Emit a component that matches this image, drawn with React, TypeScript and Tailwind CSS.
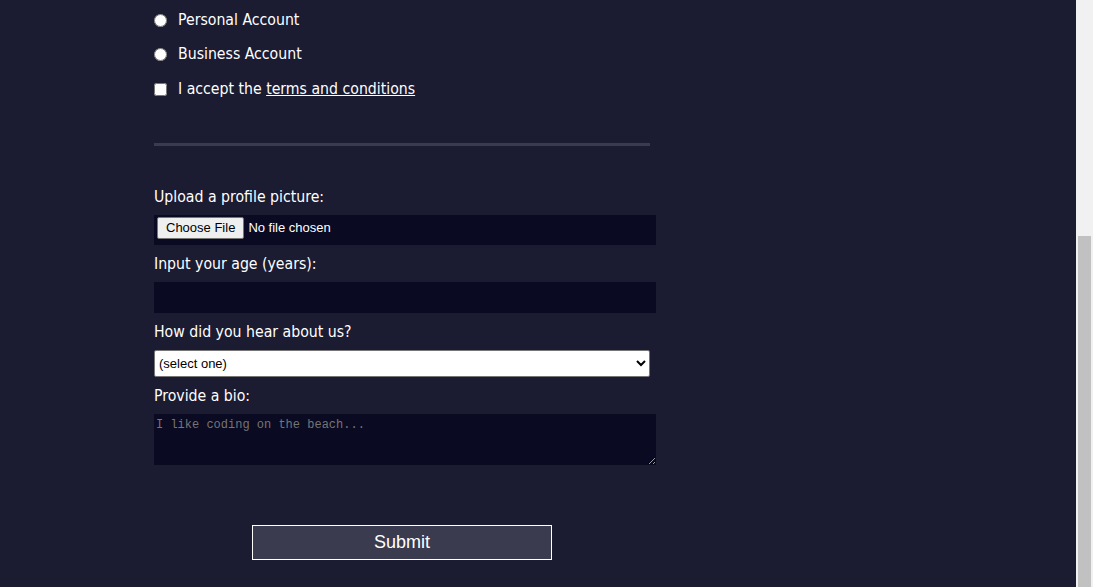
export default function App() {
  return (
    <div className="flex h-[587px] w-full overflow-hidden bg-[#1b1b32]">
      <div className="flex-1 pl-[154px] text-white font-['DejaVu_Sans_Condensed','Noto_Sans',sans-serif] text-[15.7px]">
        <div className="w-[502px] pt-[3px]">
          <label className="flex h-[34px] items-center gap-[11px]">
            <input type="radio" name="acc" className="m-0 h-[13px] w-[13px]" />
            <span>Personal Account</span>
          </label>
          <label className="flex h-[34px] items-center gap-[11px]">
            <input type="radio" name="acc" className="m-0 h-[13px] w-[13px]" />
            <span>Business Account</span>
          </label>
          <label className="mt-[1px] flex h-[34px] items-center gap-[11px]">
            <input type="checkbox" className="m-0 h-[13px] w-[13px]" />
            <span>
              I accept the <a className="underline">terms and conditions</a>
            </span>
          </label>

          <div className="mt-[37px] h-[3px] w-[496px] bg-[#3b3b4f]" />

          <div className="mt-[40px] h-[20px] leading-[22px]">Upload a profile picture:</div>
          <div className="mt-[9px] flex h-[30px] items-center bg-[#0a0a23] px-[3px] pb-[4px]">
            <input
              type="file"
              className="text-[13px] font-['Liberation_Sans',Arial,sans-serif] text-white file:mr-[4px] file:rounded-[2px] file:border file:border-[#767676] file:bg-[#efefef] file:px-[8px] file:py-0 file:text-[13px] file:text-black"
            />
          </div>

          <div className="mt-[8px] h-[20px] leading-[22px]">Input your age (years):</div>
          <input type="number" className="mt-[9px] block h-[31px] w-full bg-[#0a0a23] outline-none" />

          <div className="mt-[8px] h-[20px] leading-[22px]">How did you hear about us?</div>
          <select className="mt-[9px] block h-[27px] w-[496px] rounded-[2px] border border-[#767676] bg-white px-0 text-[13px] font-['Liberation_Sans',Arial,sans-serif] text-black">
            <option>(select one)</option>
            <option>freeCodeCamp News</option>
            <option>YouTube</option>
          </select>

          <div className="mt-[8px] h-[20px] leading-[22px]">Provide a bio:</div>
          <textarea
            placeholder="I like coding on the beach..."
            className="mt-[9px] block h-[51px] w-full bg-[#0a0a23] px-[2px] py-[2px] text-[12px] font-['Liberation_Mono',monospace] text-white outline-none placeholder:text-[#757575]"
          />

          <button className="ml-[98px] mt-[60px] block h-[35px] w-[300px] border border-white bg-[#3b3b4f] text-[18px] font-['Liberation_Sans',Arial,sans-serif] text-white">
            Submit
          </button>
        </div>
      </div>
      <div className="flex w-[17px] flex-col bg-[#f1f1f1]">
        <div className="h-[236px]" />
        <div className="mx-[2px] flex-1 bg-[#c1c1c1]" />
      </div>
    </div>
  );
}
